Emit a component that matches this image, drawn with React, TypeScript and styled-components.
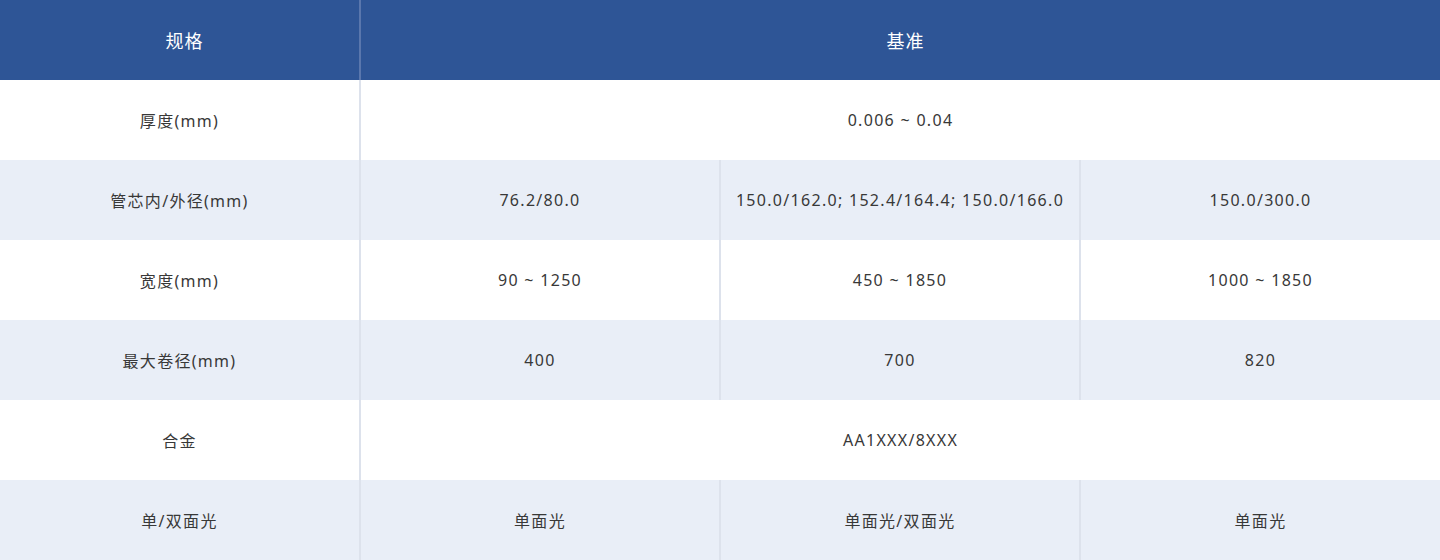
import styled, { createGlobalStyle } from "styled-components";

const GlobalStyle = createGlobalStyle`
    body {
        margin: 0;
        background: #ffffff;
        font-family: "Noto Sans", "Noto Sans CJK SC", sans-serif;
    }
`;

const Table = styled.table`
    width: 1440px;
    border-collapse: collapse;
    table-layout: fixed;
`;

const HeadRow = styled.tr`
    background-color: #2e5596;
    height: 80px;
`;

const HeadCell = styled.th`
    padding: 0 0 0 10px;
    color: #ffffff;
    font-size: 18px;
    font-weight: 400;
    letter-spacing: 1px;
    text-align: center;
    border-right: 2px solid #5a77ad;

    &:last-child {
        border-right: none;
    }
`;

const Row = styled.tr<{ $shaded: boolean }>`
    height: 80px;
    background-color: ${(p) => (p.$shaded ? "#e9eef7" : "#ffffff")};
`;

const Cell = styled.td`
    padding: 0;
    color: #383838;
    font-size: 16px;
    letter-spacing: 1.3px;
    text-align: center;
    border-right: 2px solid #dde2ec;

    &:last-child {
        border-right: none;
    }
`;

const rows: { label: string; values: string[] }[] = [
    { label: "厚度(mm)", values: ["0.006 ~ 0.04"] },
    {
        label: "管芯内/外径(mm)",
        values: ["76.2/80.0", "150.0/162.0; 152.4/164.4; 150.0/166.0", "150.0/300.0"],
    },
    { label: "宽度(mm)", values: ["90 ~ 1250", "450 ~ 1850", "1000 ~ 1850"] },
    { label: "最大卷径(mm)", values: ["400", "700", "820"] },
    { label: "合金", values: ["AA1XXX/8XXX"] },
    { label: "单/双面光", values: ["单面光", "单面光/双面光", "单面光"] },
];

function App() {
    return (
        <>
            <GlobalStyle />
            <Table>
                <colgroup>
                    <col style={{ width: 360 }} />
                    <col style={{ width: 360 }} />
                    <col style={{ width: 360 }} />
                    <col style={{ width: 360 }} />
                </colgroup>
                <thead>
                    <HeadRow>
                        <HeadCell>规格</HeadCell>
                        <HeadCell colSpan={3}>基准</HeadCell>
                    </HeadRow>
                </thead>
                <tbody>
                    {rows.map((r, i) => (
                        <Row key={r.label} $shaded={i % 2 === 1}>
                            <Cell>{r.label}</Cell>
                            {r.values.length === 1 ? (
                                <Cell colSpan={3}>{r.values[0]}</Cell>
                            ) : (
                                r.values.map((v, j) => <Cell key={j}>{v}</Cell>)
                            )}
                        </Row>
                    ))}
                </tbody>
            </Table>
        </>
    );
}

export default App;
